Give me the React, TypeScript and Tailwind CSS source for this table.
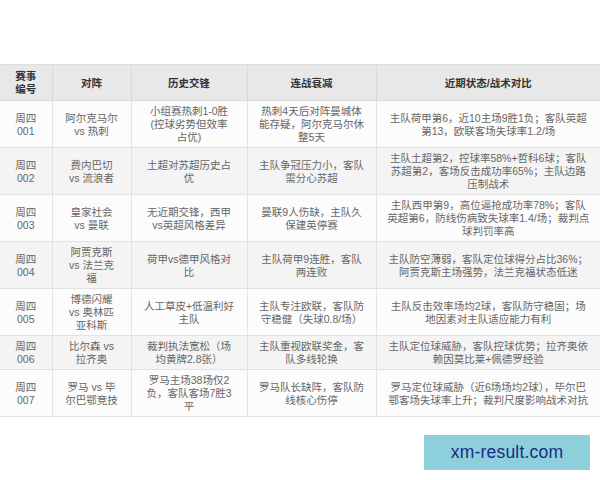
const headers = [['赛事', '编号'], ['对阵'], ['历史交锋'], ['连战衰减'], ['近期状态/战术对比']];

const colWidths = ['w-[52px]', 'w-[79px]', 'w-[116px]', 'w-[129px]', 'w-[224px]'];

// each cell is a list of lines, broken as in the source table
const rows: string[][][] = [
  [
    ['周四', '001'],
    ['阿尔克马尔', 'vs 热刺'],
    ['小组赛热刺1-0胜', '(控球劣势但效率', '占优)'],
    ['热刺4天后对阵曼城体', '能存疑，阿尔克马尔休', '整5天'],
    ['主队荷甲第6，近10主场9胜1负；客队英超', '第13，欧联客场失球率1.2/场'],
  ],
  [
    ['周四', '002'],
    ['费内巴切', 'vs 流浪者'],
    ['土超对苏超历史占', '优'],
    ['主队争冠压力小，客队', '需分心苏超'],
    ['主队土超第2，控球率58%+哲科6球；客队', '苏超第2，客场反击成功率65%；主队边路', '压制战术'],
  ],
  [
    ['周四', '003'],
    ['皇家社会', 'vs 曼联'],
    ['无近期交锋，西甲', 'vs英超风格差异'],
    ['曼联9人伤缺，主队久', '保建英停赛'],
    ['主队西甲第9，高位逼抢成功率78%；客队', '英超第6，防线伤病致失球率1.4/场；裁判点', '球判罚率高'],
  ],
  [
    ['周四', '004'],
    ['阿贾克斯', 'vs 法兰克', '福'],
    ['荷甲vs德甲风格对', '比'],
    ['主队荷甲9连胜，客队', '两连败'],
    ['主队防空薄弱，客队定位球得分占比36%；', '阿贾克斯主场强势，法兰克福状态低迷'],
  ],
  [
    ['周四', '005'],
    ['博德闪耀', 'vs 奥林匹', '亚科斯'],
    ['人工草皮+低温利好', '主队'],
    ['主队专注欧联，客队防', '守稳健（失球0.8/场）'],
    ['主队反击效率场均2球，客队防守稳固；场', '地因素对主队适应能力有利'],
  ],
  [
    ['周四', '006'],
    ['比尔森 vs', '拉齐奥'],
    ['裁判执法宽松（场', '均黄牌2.8张）'],
    ['主队重视欧联奖金，客', '队多线轮换'],
    ['主队定位球威胁，客队控球优势；拉齐奥依', '赖因莫比莱+佩德罗经验'],
  ],
  [
    ['周四', '007'],
    ['罗马 vs 毕', '尔巴鄂竞技'],
    ['罗马主场38场仅2', '负，客队客场7胜3', '平'],
    ['罗马队长缺阵，客队防', '线核心伤停'],
    ['罗马定位球威胁（近6场场均2球），毕尔巴', '鄂客场失球率上升；裁判尺度影响战术对抗'],
  ],
];

function Lines({ lines }: { lines: string[] }) {
  return (
    <>
      {lines.map((l, i) => (
        <span key={i} className="block whitespace-nowrap">
          {l}
        </span>
      ))}
    </>
  );
}

export default function App() {
  return (
    <div
      className="relative w-[600px] h-[480px] bg-white overflow-hidden"
      style={{ fontFamily: '"Liberation Sans", "Noto Sans CJK SC", sans-serif' }}
    >
      {/* table, cropped at the bottom like the screenshot */}
      <div className="mt-[64px] h-[353px] overflow-hidden">
        <table className="w-[600px] table-fixed border-collapse text-[10.5px] leading-[13px] text-center">
          <colgroup>
            {colWidths.map((w) => (
              <col key={w} className={w} />
            ))}
          </colgroup>
          <thead>
            <tr className="bg-[#e8e8e8] border-t border-[#dedede]">
              {headers.map((h, i) => (
                <th
                  key={i}
                  className="pt-[5px] pb-[4px] px-1 font-bold text-[#333] border-b border-r last:border-r-0 border-[#dadada] align-middle"
                >
                  <Lines lines={h} />
                </th>
              ))}
            </tr>
          </thead>
          <tbody>
            {rows.map((r, ri) => (
              <tr key={ri} className={ri % 2 === 1 ? 'bg-[#f4f4f4]' : 'bg-[#fcfcfc]'}>
                {r.map((cell, ci) => (
                  <td
                    key={ci}
                    className="pt-[4px] pb-[3px] px-1 text-[#666] border-b border-r last:border-r-0 border-[#e2e2e2] align-middle"
                  >
                    <Lines lines={cell} />
                  </td>
                ))}
              </tr>
            ))}
          </tbody>
        </table>
      </div>

      {/* site watermark */}
      <div className="absolute left-[424px] top-[435px] w-[166px] h-[35px] bg-[#8dd0db] flex items-center justify-center">
        <span className="text-[17.5px] text-[#1b2a8a] tracking-[0.2px]">xm-result.com</span>
      </div>
    </div>
  );
}
